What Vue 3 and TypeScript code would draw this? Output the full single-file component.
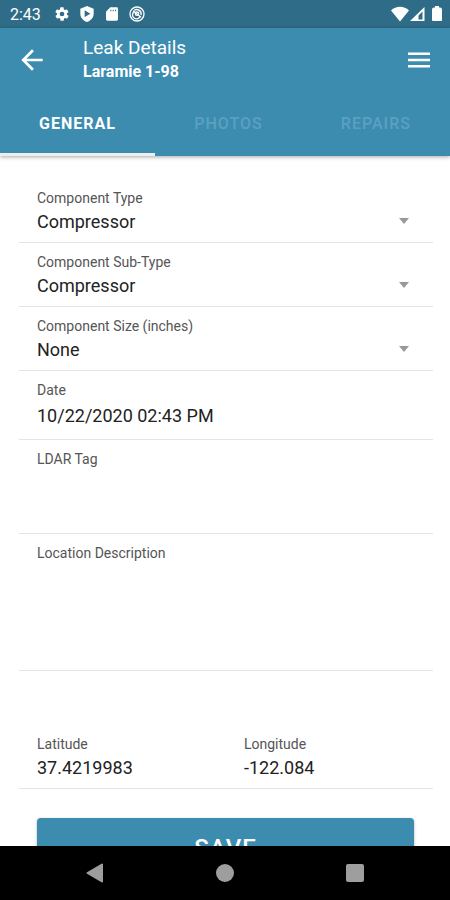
<script setup lang="ts">
import { ref } from 'vue'

interface SelectField {
  id: string
  label: string
  value: string
  options: string[]
}

const tabs = ['General', 'Photos', 'Repairs']
const activeTab = ref('General')

const selects = ref<SelectField[]>([
  { id: 'type', label: 'Component Type', value: 'Compressor', options: ['Compressor'] },
  { id: 'subtype', label: 'Component Sub-Type', value: 'Compressor', options: ['Compressor'] },
  { id: 'size', label: 'Component Size (inches)', value: 'None', options: ['None'] },
])

const date = ref('10/22/2020 02:43 PM')
const ldarTag = ref('')
const location = ref('')
const latitude = ref('37.4219983')
const longitude = ref('-122.084')
</script>

<template>
  <div class="screen">
    <div class="status">
      <span class="clock">2:43</span>
      <div class="notices">
        <svg class="glyph" viewBox="0 0 24 24" aria-hidden="true">
          <path
            d="M19.4 13c0-.3.1-.6.1-1s0-.7-.1-1l2.1-1.6c.2-.2.3-.4.1-.7l-2-3.4c-.1-.2-.4-.3-.6-.2l-2.5 1c-.5-.4-1.1-.7-1.7-1l-.4-2.6c0-.3-.2-.5-.5-.5h-4c-.2 0-.4.2-.5.5l-.4 2.6c-.6.3-1.2.6-1.7 1l-2.5-1c-.2-.1-.5 0-.6.2l-2 3.4c-.1.3-.1.5.1.7L4.6 11c-.1.3-.1.7-.1 1s0 .7.1 1l-2.1 1.6c-.2.2-.3.4-.1.7l2 3.4c.1.2.4.3.6.2l2.5-1c.5.4 1.1.7 1.7 1l.4 2.6c.1.3.3.5.5.5h4c.3 0 .5-.2.5-.5l.4-2.6c.6-.3 1.2-.6 1.7-1l2.5 1c.2.1.5 0 .6-.2l2-3.4c.1-.3.1-.5-.1-.7L19.4 13zM12 15.5a3.5 3.5 0 1 1 0-7 3.5 3.5 0 0 1 0 7z"
          />
        </svg>
        <svg class="glyph" viewBox="0 0 24 24" aria-hidden="true">
          <path fill-rule="evenodd" d="M12 0 2 4v8c0 5.500 4.200 10 10 12 5.800-2 10-6.500 10-12V4L12 0zM8.500 6.500 17 11.500l-8.500 5z" />
        </svg>
        <svg class="glyph" viewBox="0 0 24 24" aria-hidden="true">
          <path fill-rule="evenodd" d="M9.500 2H19a2 2 0 0 1 2 2v16a2 2 0 0 1-2 2H5a2 2 0 0 1-2-2V8.500L9.500 2zM9.500 5.500v2.500h1.500v-2.500zM13 5.500v2.500h1.500v-2.500zM16.500 5.500v2.500H18v-2.500z" />
        </svg>
        <svg class="glyph outline" viewBox="0 0 24 24" aria-hidden="true">
          <circle cx="12" cy="12" r="10.500" />
          <path d="M7 9a6 6 0 1 0 10 6M8 6.500a6.500 6.500 0 0 1 10 7M6 7l12 10" />
          <circle cx="12" cy="11.500" r="2.500" />
        </svg>
      </div>
      <div class="signals">
        <svg width="18" height="16" viewBox="0 0 18 16" aria-hidden="true">
          <path d="M0 4.500C5-.5 13-.5 18 4.500L9 15.500z" />
        </svg>
        <svg width="15" height="16" viewBox="0 0 15 16" aria-hidden="true">
          <path fill-rule="evenodd" d="M14.500 1v14H0zM8.500 9.500v4H12.500V5.500z" />
        </svg>
        <svg class="battery" width="10" height="16" viewBox="0 0 10 16" aria-hidden="true">
          <path d="M3 0h4v1.500h1A2 2 0 0 1 10 3.500V14a1 1 0 0 1-1 1H1a1 1 0 0 1-1-1V3.500a2 2 0 0 1 2-2h1z" />
        </svg>
      </div>
    </div>

    <header class="header">
      <div class="toolbar">
        <button class="icon-button" type="button" aria-label="Back">
          <svg width="32" height="32" viewBox="0 0 24 24" aria-hidden="true">
            <path d="M20 11H7.830l5.590-5.590L12 4l-8 8 8 8 1.410-1.410L7.830 13H20v-2z" />
          </svg>
        </button>
        <div class="titles">
          <h1>Leak Details</h1>
          <p>Laramie 1-98</p>
        </div>
        <button class="icon-button" type="button" aria-label="Menu">
          <svg width="22" height="16" viewBox="0 0 22 16" aria-hidden="true">
            <path d="M0 .5h22v2.500H0zM0 6.700h22v2.500H0zM0 13h22v2.500H0z" />
          </svg>
        </button>
      </div>
      <nav class="tabs">
        <button
          v-for="tab in tabs"
          :key="tab"
          type="button"
          class="tab"
          :class="{ active: tab === activeTab }"
          @click="activeTab = tab"
        >
          {{ tab }}
        </button>
      </nav>
    </header>

    <form class="form" @submit.prevent>
      <div v-for="field in selects" :key="field.id" class="item">
        <label :for="field.id">{{ field.label }}</label>
        <div class="select">
          <select :id="field.id" v-model="field.value">
            <option v-for="option in field.options" :key="option">{{ option }}</option>
          </select>
          <svg width="10" height="6" viewBox="0 0 10 6" aria-hidden="true">
            <path d="M0 0h10L5 6z" />
          </svg>
        </div>
      </div>
      <div class="item date">
        <label for="date">Date</label>
        <input id="date" v-model="date" type="text" />
      </div>
      <div class="item tag">
        <label for="tag">LDAR Tag</label>
        <input id="tag" v-model="ldarTag" type="text" />
      </div>
      <div class="item">
        <label for="location">Location Description</label>
        <textarea id="location" v-model="location"></textarea>
      </div>
      <div class="item coordinates">
        <div>
          <label for="latitude">Latitude</label>
          <input id="latitude" v-model="latitude" type="text" />
        </div>
        <div>
          <label for="longitude">Longitude</label>
          <input id="longitude" v-model="longitude" type="text" />
        </div>
      </div>
      <button class="save" type="submit">Save</button>
    </form>

    <div class="system-nav">
      <button type="button" aria-label="System back">
        <svg width="20" height="20" viewBox="0 0 20 20" aria-hidden="true">
          <path d="M17 1.500v17L2.500 10z" stroke-width="2" stroke-linejoin="round" />
        </svg>
      </button>
      <button type="button" aria-label="Home">
        <svg width="20" height="20" viewBox="0 0 20 20" aria-hidden="true">
          <circle cx="10" cy="10" r="9" />
        </svg>
      </button>
      <button type="button" aria-label="Recent apps">
        <svg width="20" height="20" viewBox="0 0 20 20" aria-hidden="true">
          <rect x="1" y="1" width="18" height="18" rx="2" />
        </svg>
      </button>
    </div>
  </div>
</template>

<style>
body {
  margin: 0;
}
</style>

<style scoped>
.screen {
  display: flex;
  flex-direction: column;
  height: 100vh;
  background: #fff;
  color: #222;
  font-family: Roboto, sans-serif;
}

button,
input,
select,
textarea {
  margin: 0;
  padding: 0;
  border: 0;
  border-radius: 0;
  background: none;
  color: inherit;
  font-family: inherit;
  outline: none;
}

button {
  cursor: pointer;
}

svg {
  display: block;
  fill: currentColor;
}

.status {
  display: flex;
  align-items: center;
  flex: none;
  height: 28px;
  padding: 0 8px 0 10px;
  background: #2f6c87;
  color: #fff;
}

.clock {
  font-size: 16px;
}

.notices {
  display: flex;
  gap: 9px;
  margin-left: 13px;
}

.glyph {
  width: 16px;
  height: 16px;
}

.outline {
  fill: none;
  stroke: currentColor;
  stroke-width: 2;
}

.signals {
  display: flex;
  gap: 1px;
  margin-left: auto;
}

.battery {
  margin-left: 6px;
}

.header {
  position: relative;
  flex: none;
  background: #3c8cb0;
  color: #fff;
  box-shadow: 0 1px 4px rgba(0, 0, 0, 0.35);
}

.toolbar {
  display: flex;
  align-items: center;
  height: 64px;
  padding: 0 20px 0 16px;
}

.titles {
  flex: 1;
  margin-left: 35px;
}

h1,
p {
  margin: 0;
  line-height: 24px;
}

h1 {
  font-size: 19px;
  font-weight: 400;
}

p {
  font-size: 16px;
  font-weight: 700;
}

.tabs {
  display: flex;
}

.tab {
  flex: 1 1 auto;
  height: 64px;
  padding-top: 2px;
  border-bottom: 3px solid transparent;
  color: #5ba0c0;
  font-size: 16px;
  font-weight: 500;
  letter-spacing: 1px;
  text-transform: uppercase;
}

.tab.active {
  border-bottom-color: #eee;
  color: #fff;
  font-weight: 700;
}

.form {
  flex: 1;
  min-height: 0;
  padding: 23px 17px 0 19px;
  overflow-y: auto;
  scrollbar-width: none;
}

.item {
  padding: 11px 0 6px 18px;
  border-bottom: 1px solid #e4e4e4;
}

label {
  display: block;
  color: #555;
  font-size: 14px;
  line-height: 16px;
}

input,
select,
textarea {
  display: block;
  width: 100%;
  height: 30px;
  font-size: 18px;
}

select {
  appearance: none;
}

textarea {
  height: 103px;
  resize: none;
}

.select {
  display: flex;
  align-items: center;
  padding-right: 24px;
  color: #222;
}

.select svg {
  flex: none;
  color: #999;
}

.date input {
  height: 35px;
}

.tag input {
  height: 60px;
}

.coordinates {
  display: grid;
  grid-template-columns: 1fr 1fr;
  gap: 18px;
  margin-top: 54px;
}

.save {
  display: block;
  width: calc(100% - 37px);
  height: 60px;
  margin: 29px 19px 20px 18px;
  border-radius: 4px;
  background: #3c8cb0;
  box-shadow: 0 1px 3px rgba(0, 0, 0, 0.3);
  color: #fff;
  font-size: 24px;
  font-weight: 500;
  letter-spacing: 1px;
  text-transform: uppercase;
}

.system-nav {
  display: flex;
  align-items: center;
  flex: none;
  height: 54px;
  padding: 0 30px;
  background: #000;
  color: #9e9e9e;
}

.system-nav button {
  display: flex;
  flex: 1;
  justify-content: center;
}

.system-nav path {
  stroke: currentColor;
}
</style>
